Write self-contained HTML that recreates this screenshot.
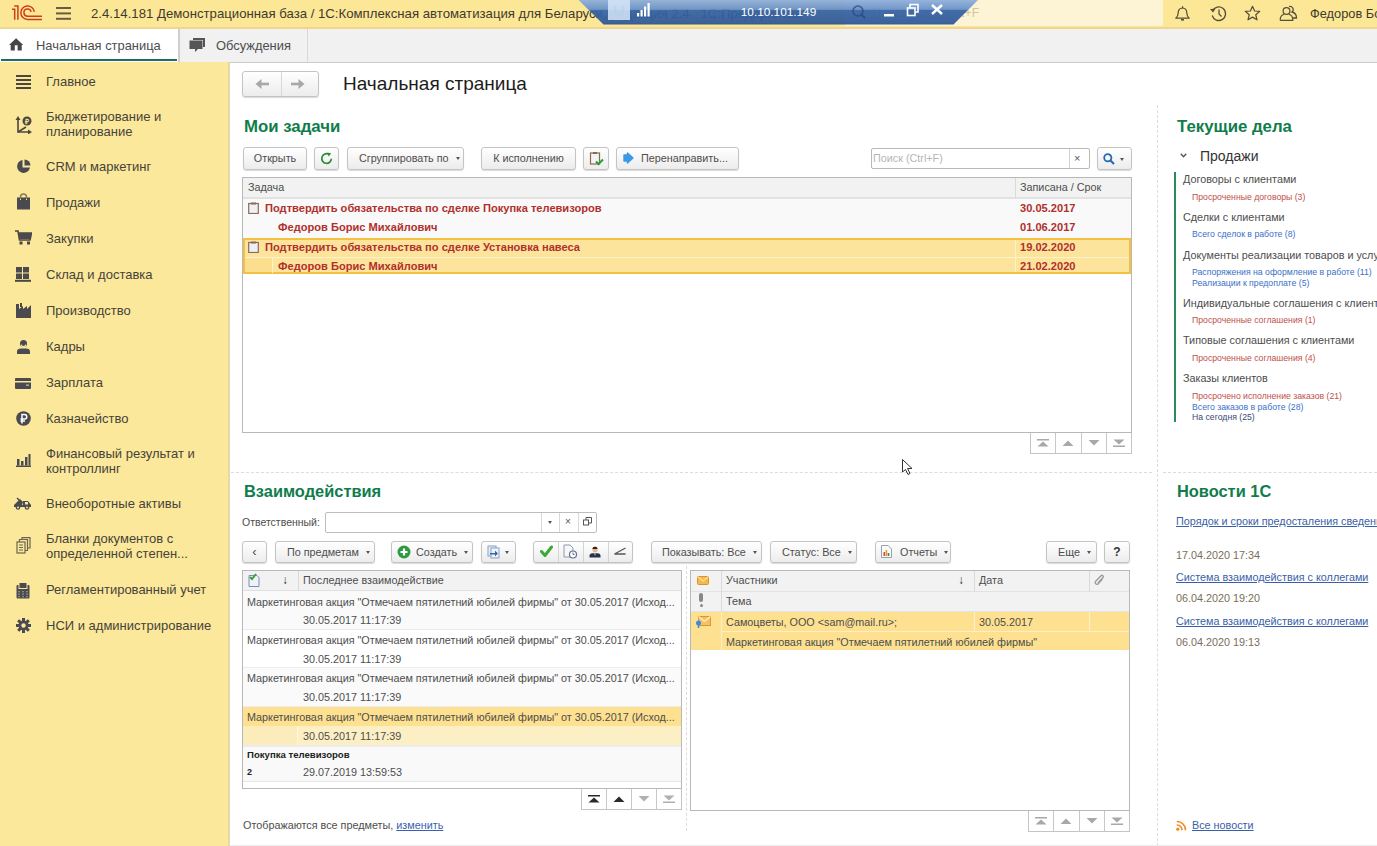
<!DOCTYPE html>
<html><head><meta charset="utf-8">
<style>
*{margin:0;padding:0;box-sizing:border-box}
html,body{width:1377px;height:846px;overflow:hidden;background:#fff;font-family:"Liberation Sans",sans-serif;color:#4d4d4d}
.a{position:absolute;white-space:nowrap}
#title{position:absolute;left:0;top:0;width:1377px;height:29px;background:#fce796}
#tabs{position:absolute;left:0;top:29px;width:1377px;height:34px;background:#f1f1f1;border-bottom:1px solid #cbcbcb}
#side{position:absolute;left:0;top:62px;width:230px;height:784px;background:#fbe89b;border-right:2px solid #e2d9ae}
.si{position:absolute;left:46px;font-size:13px;line-height:15px;color:#46433a}
.ic{position:absolute}
.btn{position:absolute;height:23px;border:1px solid #c4c4c4;border-radius:3px;background:linear-gradient(#fff,#ececec);box-shadow:0 1px 1px rgba(0,0,0,.15);font-size:12px;line-height:21px;color:#4d4d4d;text-align:center;white-space:nowrap}
.h2{position:absolute;font-size:16.8px;font-weight:bold;color:#0f7d4b;white-space:nowrap}
.t12{font-size:12px}
.t11{font-size:10.8px}
.tb{font-size:11.1px;font-weight:bold;color:#b0302c;line-height:19px}
.dd{display:inline-block;width:0;height:0;border-left:2.5px solid transparent;border-right:2.5px solid transparent;border-top:3px solid #555;vertical-align:middle;margin-left:4px;margin-top:-2px}
.btn{font-size:10.8px}
.nav{position:absolute;border:1px solid #c4c4c4;border-top:none;background:#fff;display:flex}
.nav i{flex:1;border-left:1px solid #c8c8c8;display:flex;align-items:center;justify-content:center}
.nav svg{display:block}
.nav i:first-child{border-left:none}
.rowt{line-height:19px;color:#4d4d4d}
.cd{left:1183px;font-size:10.8px;line-height:17px;color:#4d4d4d}
.cl{left:1192px;font-size:8.7px;line-height:12px}
.red{color:#c0504a}.blue{color:#3a6fc8}.navy{color:#3a4a70}
.nl{left:1176px;font-size:10.8px;line-height:17px;color:#3a5fa8;text-decoration:underline}
.nd{left:1176px;font-size:10.8px;line-height:17px;color:#7a6e5a}
</style></head><body>

<div id="title">
  <svg class="ic" style="left:8px;top:2px" width="40" height="22" viewBox="0 0 40 22"><g stroke="#cc3e1c" stroke-width="1.5" fill="none"><path d="M4 7.3 H6.7 V17.8"/><path d="M6.2 3.9 H9.9 V17.8"/><path d="M26.3 9.9 A6.75 6.75 0 1 0 19.6 17.4 H34"/><path d="M23.1 9.9 A3.6 3.6 0 1 0 19.9 14.2 H34"/></g></svg>
  <div class="ic" style="left:56px;top:7px;width:15px;height:1.6px;background:#6a5c44;box-shadow:0 5.4px 0 #6a5c44,0 10.8px 0 #6a5c44"></div>
  <div class="a" style="left:91px;top:5px;font-size:13.2px;line-height:17px;color:#3f3a2e">2.4.14.181 Демонстрационная база / 1С:Комплексная автоматизация для Беларуси, редакция 2.4 &nbsp; 1С:Предприятие</div>
  <div class="a" style="left:845px;top:0;width:318px;height:26px;background:#fdf4d6"></div>
  <svg class="ic" style="left:852px;top:6px" width="14" height="14" viewBox="0 0 14 14"><circle cx="5.5" cy="5.5" r="4.5" stroke="#b8a880" stroke-width="1.4" fill="none"/><path d="M9 9 L13 13" stroke="#b8a880" stroke-width="1.6"/></svg>
  <div class="a" style="left:872px;top:5px;font-size:12.3px;line-height:17px;color:#d4c49c">Поиск (Ctrl+Shift+F</div>
  <svg class="ic" style="left:1174px;top:5px" width="17" height="17" viewBox="0 0 17 17"><path d="M1.8 13.2 Q4 11.5 4.2 8 Q4.2 3.2 8.5 3 Q12.8 3.2 12.8 8 Q13 11.5 15.2 13.2Z" stroke="#564e3e" stroke-width="1.25" fill="none" stroke-linejoin="round"/><path d="M7 14.8 H10" stroke="#564e3e" stroke-width="1.6"/><rect x="8" y="1.2" width="1.2" height="1.8" fill="#564e3e"/></svg>
  <svg class="ic" style="left:1209px;top:5px" width="18" height="17" viewBox="0 0 18 17"><path d="M3.5 6 A6.8 6.8 0 1 1 3.2 10.5" stroke="#564e3e" stroke-width="1.3" fill="none"/><path d="M1 4 L4 7.5 L6.5 3.8Z" fill="#564e3e"/><path d="M10 4.5 V9 L12.5 11.5" stroke="#564e3e" stroke-width="1.3" fill="none"/></svg>
  <svg class="ic" style="left:1244px;top:5px" width="17" height="17" viewBox="0 0 17 17"><path d="M8.5 1.3 L10.6 6 L15.7 6.4 L11.8 9.8 L13 14.8 L8.5 12.1 L4 14.8 L5.2 9.8 L1.3 6.4 L6.4 6Z" stroke="#564e3e" stroke-width="1.25" fill="none" stroke-linejoin="round"/></svg>
  <svg class="ic" style="left:1279px;top:5px" width="19" height="17" viewBox="0 0 19 17"><path d="M10 1.5 A3.2 3.2 0 0 1 13 7 Q17.5 8 17.5 13 H14" stroke="#564e3e" stroke-width="1.3" fill="none"/><circle cx="7.5" cy="6" r="3.4" stroke="#564e3e" stroke-width="1.25" fill="none"/><path d="M1.2 15.3 Q1.2 10 5 9.5 M10 9.5 Q13.8 10 13.8 15.3 H1.2" stroke="#564e3e" stroke-width="1.25" fill="none"/></svg>
  <div class="a" style="left:1310px;top:5px;font-size:12.8px;line-height:17px;color:#3f3a2e">Федоров Борис Михайлович</div>
  <div class="a" style="left:0;top:27px;width:1377px;height:2px;background:#efd590"></div>
</div>
<!-- RDP bar -->
<svg class="ic" style="left:578px;top:0;z-index:5" width="401" height="25" viewBox="0 0 401 25">
  <defs>
    <linearGradient id="rg" x1="0" y1="0" x2="0" y2="1">
      <stop offset="0" stop-color="#8eaedb"/>
      <stop offset="0.38" stop-color="#6690c8"/>
      <stop offset="0.42" stop-color="#3563a6"/>
      <stop offset="0.92" stop-color="#2d5899"/>
      <stop offset="1" stop-color="#24508f"/>
    </linearGradient>
  </defs>
  <path d="M0.5 0 H400 L375.5 24.6 H25.5Z" fill="url(#rg)" opacity="0.93"/>
  <rect x="30" y="0" width="22" height="20" fill="#d6e6f8" opacity="0.85"/>
  <path d="M37 6 V15 H45 M37 12 H45 M45 6 V15" stroke="#b8d0ec" stroke-width="1.2" fill="none"/>
  <g fill="#fff"><rect x="59" y="13" width="2.2" height="3.5"/><rect x="62.5" y="10" width="2.2" height="6.5"/><rect x="66" y="6.5" width="2.2" height="10"/><rect x="69.5" y="3" width="2.2" height="13.5"/></g>
  <text x="200.5" y="15.5" font-family="Liberation Sans" font-size="11.8" fill="#fff" text-anchor="middle">10.10.101.149</text>
  <circle cx="280" cy="11" r="5" stroke="#2a4c86" stroke-width="1.6" fill="none" opacity="0.8"/><path d="M283.5 14.5 L287 18" stroke="#2a4c86" stroke-width="2" opacity="0.8"/>
  <rect x="306" y="14" width="10" height="2.5" fill="#fff"/>
  <rect x="329.5" y="8" width="7.5" height="7.5" fill="none" stroke="#fff" stroke-width="1.6"/>
  <path d="M332 8 V4.5 H340 V12 H337" stroke="#fff" stroke-width="1.6" fill="none"/>
  <path d="M354 5 L364 14 M364 5 L354 14" stroke="#fff" stroke-width="2.4"/>
</svg>

<div id="tabs">
  <div class="a" style="left:0;top:0;width:180px;height:33px;background:#fff;border-right:2px solid #cfcfcf"></div>
  <div class="a" style="left:1px;top:30px;width:176px;height:2px;background:#1d6e5c"></div>
  <div class="a" style="left:307px;top:0;width:1px;height:33px;background:#d8d8d8"></div>
  <svg class="ic" style="left:9px;top:9px" width="15" height="13" viewBox="0 0 15 13"><path d="M7.1 0.3 L0 6.9 H1.7 V12.5 H5.8 V7.2 H8.6 V12.5 H12.7 V6.9 H14.2Z" fill="#464646"/></svg>
  <div class="a" style="left:36px;top:8px;font-size:12.9px;line-height:17px;color:#4d4d4d">Начальная страница</div>
  <svg class="ic" style="left:189px;top:8px" width="17" height="16" viewBox="0 0 17 16"><path d="M4 1 H16 V10 H14 V3 H4Z" fill="#555"/><path d="M0.5 3.5 H13.5 V12 H9 L6 15 V12 H0.5Z" fill="#555"/></svg>
  <div class="a" style="left:216px;top:8px;font-size:12.9px;line-height:17px;color:#4d4d4d">Обсуждения</div>
</div>

<div id="side">
  <svg class="ic" style="left:16px;top:12px" width="15" height="15" viewBox="0 0 15 15"><g fill="#4a4740"><rect x="0" y="1" width="15" height="2"/><rect x="0" y="5" width="15" height="2"/><rect x="0" y="9" width="15" height="2"/><rect x="0" y="13" width="15" height="2"/></g></svg>
  <div class="si" style="top:12px">Главное</div>

  <svg class="ic" style="left:15px;top:53px" width="17" height="19" viewBox="0 0 17 19"><g stroke="#4a4740" stroke-width="1.6" fill="none"><path d="M3 3 V17 H14"/><path d="M3 17 L11 12"/></g><g fill="#4a4740"><path d="M0.5 5 L3 1 L5.5 5Z"/><path d="M13 14.5 L17 17 L13 19.5Z"/><circle cx="12" cy="6" r="4.5"/></g><text x="12" y="8.5" font-size="7" font-weight="bold" fill="#fbe89a" text-anchor="middle" font-family="Liberation Sans">₽</text></svg>
  <div class="si" style="top:47px">Бюджетирование и<br>планирование</div>

  <svg class="ic" style="left:16px;top:97px" width="15" height="15" viewBox="0 0 15 15"><path d="M6.5 1 A6.5 6.5 0 1 0 14 8.5 H6.5Z" fill="#4a4a50"/><path d="M8.5 0.5 V6.5 H14.5 A6 6 0 0 0 8.5 0.5Z" fill="#4a4a50"/></svg>
  <div class="si" style="top:97px">CRM и маркетинг</div>

  <svg class="ic" style="left:17px;top:131px" width="13" height="17" viewBox="0 0 13 17"><path d="M3.5 6 V4 A3 3 0 0 1 9.5 4 V6" stroke="#8a7a50" stroke-width="1.5" fill="none"/><path d="M0 4.5 H3 V7 H4 V4.5 H9 V7 H10 V4.5 H13 V16.5 H0Z" fill="#4a4a50"/></svg>
  <div class="si" style="top:133px">Продажи</div>

  <svg class="ic" style="left:15px;top:168px" width="17" height="15" viewBox="0 0 17 15"><path d="M0 1 H3 L4.5 10 H15 L16.5 3 H3.5" stroke="#4a4740" stroke-width="1.6" fill="none"/><path d="M3.5 3 H16.5 L15 9 H4.5Z" fill="#4a4a50"/><rect x="4.5" y="11.5" width="3" height="3" fill="#4a4740"/><rect x="12" y="11.5" width="3" height="3" fill="#4a4740"/></svg>
  <div class="si" style="top:169px">Закупки</div>

  <svg class="ic" style="left:15px;top:205px" width="16" height="15" viewBox="0 0 16 15"><g fill="#4a4a50"><rect x="1" y="0" width="6" height="5.5"/><rect x="8" y="0" width="6" height="5.5"/><rect x="1" y="6.5" width="6" height="5.5"/><rect x="8" y="6.5" width="6" height="5.5"/><rect x="0" y="12.8" width="16" height="2" fill="#4a4740"/></g></svg>
  <div class="si" style="top:205px">Склад и доставка</div>

  <svg class="ic" style="left:16px;top:240px" width="15" height="16" viewBox="0 0 15 16"><path d="M0 2 H3 V7 L7 4 V7 L11 4 V7 L15 3 V16 H0Z" fill="#4a4a50"/><rect x="4" y="1" width="2" height="4" fill="#4a4a50"/></svg>
  <div class="si" style="top:241px">Производство</div>

  <svg class="ic" style="left:16px;top:277px" width="15" height="15" viewBox="0 0 15 15"><circle cx="7.5" cy="4.5" r="3.5" fill="#4a4a50"/><path d="M5 5 Q7.5 9 10 5 V7 Q7.5 10 5 7Z" fill="#f5e2b0"/><path d="M1 15 V12.5 Q1 9.5 5 9.5 H10 Q14 9.5 14 12.5 V15Z" fill="#4a4a50"/></svg>
  <div class="si" style="top:277px">Кадры</div>

  <svg class="ic" style="left:15px;top:316px" width="16" height="11" viewBox="0 0 16 11"><rect x="0" y="0" width="16" height="11" rx="1" fill="#4a4a50"/><rect x="0" y="3" width="16" height="1.5" fill="#fbe89a"/><rect x="11" y="6.5" width="3" height="1.3" fill="#bbb"/></svg>
  <div class="si" style="top:313px">Зарплата</div>

  <svg class="ic" style="left:16px;top:349px" width="15" height="15" viewBox="0 0 15 15"><circle cx="7.5" cy="7.5" r="7.3" fill="#4a4a50"/><path d="M6 12.5 V3.5 H8.5 A2.2 2.2 0 0 1 8.5 8 H4.5 M4.5 10 H9" stroke="#fff" stroke-width="1.5" fill="none"/></svg>
  <div class="si" style="top:349px">Казначейство</div>

  <svg class="ic" style="left:16px;top:392px" width="15" height="13" viewBox="0 0 15 13"><g fill="#4a4a50"><rect x="1" y="5" width="2.5" height="6.5"/><rect x="5" y="7" width="2.5" height="4.5"/><rect x="9" y="3" width="2.5" height="8.5"/><rect x="12.5" y="0" width="2" height="11.5"/><rect x="0" y="11.5" width="15" height="1.5"/></g></svg>
  <div class="si" style="top:384px">Финансовый результат и<br>контроллинг</div>

  <svg class="ic" style="left:14px;top:434px" width="18" height="14" viewBox="0 0 18 14"><g fill="#4a4a50"><path d="M0 9 L6 3 L9 6 L8 9Z"/><path d="M9 5 H14 L17 9 V11 H9Z"/><rect x="0" y="9" width="17" height="2"/><circle cx="4" cy="11.5" r="2.3"/><circle cx="13" cy="11.5" r="2.3"/></g><path d="M3 2 L8 7" stroke="#4a4a50" stroke-width="1.4"/><rect x="11" y="6" width="3" height="2.5" fill="#fbe89a"/><circle cx="4" cy="11.5" r="1" fill="#fbe89a"/><circle cx="13" cy="11.5" r="1" fill="#fbe89a"/></svg>
  <div class="si" style="top:434px">Внеоборотные активы</div>

  <svg class="ic" style="left:16px;top:475px" width="15" height="17" viewBox="0 0 15 17"><g stroke="#6a6450" stroke-width="1.2" fill="none"><rect x="1" y="5" width="8" height="11"/><path d="M3.5 5 V2.5 H11.5 V13.5 H9"/><path d="M6 2.5 V0.6 H14 V11 H11.5"/><path d="M3 8 H7 M3 10.5 H7 M3 13 H7"/></g></svg>
  <div class="si" style="top:469px">Бланки документов с<br>определенной степен...</div>

  <svg class="ic" style="left:16px;top:520px" width="14" height="17" viewBox="0 0 14 17"><rect x="0.5" y="3" width="13" height="13.5" rx="1" fill="#4a4a50"/><rect x="3" y="0.5" width="8" height="6" fill="#4a4a50" stroke="#fbe89a" stroke-width="1"/><g fill="#8a8a80"><rect x="2" y="9" width="2" height="1.3"/><rect x="6" y="9" width="2" height="1.3"/><rect x="10" y="9" width="2" height="1.3"/><rect x="2" y="11.5" width="2" height="1.3"/><rect x="6" y="11.5" width="2" height="1.3"/><rect x="10" y="11.5" width="2" height="1.3"/><rect x="2" y="14" width="2" height="1.3"/><rect x="6" y="14" width="2" height="1.3"/><rect x="10" y="14" width="2" height="1.3"/></g></svg>
  <div class="si" style="top:520px">Регламентированный учет</div>

  <svg class="ic" style="left:16px;top:556px" width="15" height="15" viewBox="0 0 15 15"><g fill="#4a4a50"><circle cx="7.5" cy="7.5" r="5"/><g id="tooth"><rect x="6" y="0" width="3" height="15"/></g><rect x="6" y="0" width="3" height="15" transform="rotate(45 7.5 7.5)"/><rect x="6" y="0" width="3" height="15" transform="rotate(90 7.5 7.5)"/><rect x="6" y="0" width="3" height="15" transform="rotate(135 7.5 7.5)"/></g><circle cx="7.5" cy="7.5" r="2.2" fill="#fbe89a"/></svg>
  <div class="si" style="top:556px">НСИ и администрирование</div>
</div>


<!-- MAIN -->
<div class="btn" style="left:242px;top:71px;width:77px;height:26px"></div>
<div class="a" style="left:281px;top:72px;width:1px;height:24px;background:#d8d8d8"></div>
<svg class="ic" style="left:254px;top:78px" width="16" height="12" viewBox="0 0 16 12"><path d="M15 6 H4" stroke="#a8a8a8" stroke-width="2.6"/><path d="M7.5 1 L1.5 6 L7.5 11Z" fill="#a8a8a8"/></svg>
<svg class="ic" style="left:290px;top:78px" width="16" height="12" viewBox="0 0 16 12"><path d="M1 6 H12" stroke="#a8a8a8" stroke-width="2.6"/><path d="M8.5 1 L14.5 6 L8.5 11Z" fill="#a8a8a8"/></svg>
<div class="a" style="left:343px;top:72px;font-size:19px;line-height:24px;color:#1c1c1c">Начальная страница</div>

<div class="h2" style="left:244px;top:117px;line-height:20px">Мои задачи</div>

<div class="btn" style="left:243px;top:147px;width:64px">Открыть</div>
<div class="btn" style="left:314px;top:147px;width:25px"></div>
<svg class="ic" style="left:320px;top:152px" width="13" height="13" viewBox="0 0 13 13"><path d="M11.4 6.8 A4.8 4.8 0 1 1 8.2 2.0" stroke="#2b8c3a" stroke-width="1.7" fill="none"/><path d="M7.3 0.6 L11.2 1.6 L8.6 4.6Z" fill="#1f8a30"/></svg>
<div class="btn" style="left:347px;top:147px;width:117px;text-align:left;padding-left:11px">Сгруппировать по <span class="dd"></span></div>
<div class="btn" style="left:481px;top:147px;width:95px">К исполнению</div>
<div class="btn" style="left:583px;top:147px;width:26px"></div>
<svg class="ic" style="left:589px;top:151px" width="15" height="15" viewBox="0 0 15 15"><rect x="1.5" y="2" width="9" height="11" fill="#f4f4f4" stroke="#8a6a50" stroke-width="1.2"/><rect x="4" y="1" width="4" height="2" fill="#8a6a50"/><path d="M7 10.5 L9.5 13 L14 8.5" stroke="#2a9a3a" stroke-width="2" fill="none"/></svg>
<div class="btn" style="left:616px;top:147px;width:123px;text-align:left;padding-left:24px">Перенаправить...</div>
<svg class="ic" style="left:623px;top:152px" width="12" height="12" viewBox="0 0 12 12"><path d="M1 3 H4.5 V1 L10 6 L4.5 11 V9 H1Z" fill="#3a9ae8" stroke="#3a9ae8" stroke-width="1.4" stroke-linejoin="round"/></svg>

<div class="a" style="left:871px;top:148px;width:219px;height:21px;border:1px solid #b9b9b9;border-radius:2px;background:#fff"></div>
<div class="a" style="left:1069px;top:149px;width:1px;height:19px;background:#d0d0d0"></div>
<div class="a" style="left:873px;top:149px;font-size:10.8px;line-height:19px;color:#b5b5b5">Поиск (Ctrl+F)</div>
<div class="a" style="left:1074px;top:149px;font-size:11px;line-height:19px;color:#555">×</div>
<div class="btn" style="left:1097px;top:147px;width:35px"></div>
<svg class="ic" style="left:1103px;top:153px" width="12" height="12" viewBox="0 0 12 12"><circle cx="4.8" cy="4.8" r="3.6" stroke="#2b6cb0" stroke-width="1.8" fill="none"/><path d="M7.5 7.5 L11 11" stroke="#2b6cb0" stroke-width="2.2"/></svg>
<div class="a" style="left:1120px;top:158px;border-left:2.5px solid transparent;border-right:2.5px solid transparent;border-top:3px solid #555"></div>

<!-- tasks table -->
<div class="a" style="left:242px;top:177px;width:890px;height:256px;border:1px solid #b8b8b8;background:#fff"></div>
<div class="a" style="left:243px;top:178px;width:888px;height:21px;background:#f2f2f2;border-bottom:2px solid #e2e2e2"></div>
<div class="a" style="left:1015px;top:178px;width:1px;height:20px;background:#dadada"></div>
<div class="a t11" style="left:248px;top:178px;line-height:19px;color:#4d4d4d">Задача</div>
<div class="a t11" style="left:1020px;top:178px;line-height:19px;color:#4d4d4d">Записана / Срок</div>
<div class="a" style="left:243px;top:199px;width:888px;height:39px;background:#f9f9f9"></div>
<div class="a" style="left:243px;top:238px;width:888px;height:36px;background:#fde49c;border:2px solid #f3c03f"></div>
<div class="a" style="left:245px;top:257px;width:884px;height:1px;background:#fff1c8"></div>
<div class="a" style="left:272px;top:258px;width:1px;height:15px;background:#fff1c8"></div>
<div class="a" style="left:245px;top:258px;width:27px;height:14px;background:#fbdf8e"></div>
<div class="a" style="left:1015px;top:240px;width:1px;height:32px;background:#fff1c8"></div>
<svg class="ic" style="left:248px;top:202px" width="11" height="12" viewBox="0 0 11 12"><rect x="0.7" y="1.5" width="9.6" height="10" fill="#eef0f5" stroke="#8a6a58" stroke-width="1.2"/><rect x="3" y="0.5" width="5" height="2" fill="#8a6a58"/></svg>
<svg class="ic" style="left:248px;top:241px" width="11" height="12" viewBox="0 0 11 12"><rect x="0.7" y="1.5" width="9.6" height="10" fill="#eef0f5" stroke="#8a6a58" stroke-width="1.2"/><rect x="3" y="0.5" width="5" height="2" fill="#8a6a58"/></svg>
<div class="a tb" style="left:265px;top:199px">Подтвердить обязательства по сделке Покупка телевизоров</div>
<div class="a tb" style="left:278px;top:218px">Федоров Борис Михайлович</div>
<div class="a tb" style="left:265px;top:238px">Подтвердить обязательства по сделке Установка навеса</div>
<div class="a tb" style="left:278px;top:257px">Федоров Борис Михайлович</div>
<div class="a tb" style="left:1020px;top:199px">30.05.2017</div>
<div class="a tb" style="left:1020px;top:218px">01.06.2017</div>
<div class="a tb" style="left:1020px;top:238px">19.02.2020</div>
<div class="a tb" style="left:1020px;top:257px">21.02.2020</div>

<div class="nav" style="left:1030px;top:433px;width:102px;height:21px"><i><svg width="12" height="8" viewBox="0 0 12 8"><rect x="0" y="0" width="12" height="1.5" fill="#a8a8a8"/><path d="M0.5 7.5 L6 2.5 L11.5 7.5Z" fill="#a8a8a8"/></svg></i><i><svg width="12" height="6" viewBox="0 0 12 6"><path d="M0.5 6 L6 0.5 L11.5 6Z" fill="#a8a8a8"/></svg></i><i><svg width="12" height="6" viewBox="0 0 12 6"><path d="M0.5 0 L6 5.5 L11.5 0Z" fill="#a8a8a8"/></svg></i><i><svg width="12" height="8" viewBox="0 0 12 8"><path d="M0.5 0.5 L6 5.5 L11.5 0.5Z" fill="#a8a8a8"/><rect x="0" y="6.5" width="12" height="1.5" fill="#a8a8a8"/></svg></i></div>


<!-- separators -->
<div class="a" style="left:231px;top:472px;width:921px;height:1px;border-top:1px dashed #dcdcdc"></div>
<div class="a" style="left:1163px;top:472px;width:214px;height:1px;border-top:1px dashed #dcdcdc"></div>
<div class="a" style="left:1157px;top:105px;width:1px;height:741px;border-left:1px dashed #dcdcdc"></div>
<div class="a" style="left:686px;top:566px;width:1px;height:265px;border-left:1px dashed #dcdcdc"></div>
<div class="a" style="left:230px;top:845px;width:1147px;height:1px;background:#ececec"></div>

<!-- cursor -->
<svg class="ic" style="left:902px;top:459px" width="11" height="16" viewBox="0 0 11 16"><path d="M0.5 0.5 V13 L3.5 10.5 L6 15.5 L8 14.5 L5.5 9.5 H10Z" fill="#fff" stroke="#333" stroke-width="1"/></svg>

<!-- Interactions -->
<div class="h2" style="left:244px;top:481px;line-height:20px;font-size:16.4px">Взаимодействия</div>
<div class="a" style="left:242px;top:514px;font-size:10.5px;line-height:17px;color:#4d4d4d">Ответственный:</div>
<div class="a" style="left:325px;top:512px;width:272px;height:21px;border:1px solid #bdbdbd;border-radius:2px;background:#fff"></div>
<div class="a" style="left:541px;top:513px;width:1px;height:19px;background:#d8d8d8"></div>
<div class="a" style="left:559px;top:513px;width:1px;height:19px;background:#d8d8d8"></div>
<div class="a" style="left:578px;top:513px;width:1px;height:19px;background:#d8d8d8"></div>
<div class="a" style="left:548px;top:521px;border-left:2.5px solid transparent;border-right:2.5px solid transparent;border-top:3px solid #555"></div>
<div class="a" style="left:565px;top:513px;font-size:10px;line-height:18px;color:#555">×</div>
<svg class="ic" style="left:583px;top:517px" width="9" height="9" viewBox="0 0 9 9"><rect x="0.5" y="3" width="5" height="5" fill="#fff" stroke="#555" stroke-width="1"/><path d="M3 3 V0.5 H8.5 V6 H5.5" stroke="#555" stroke-width="1" fill="none"/></svg>

<div class="btn" style="left:242px;top:541px;width:25px;height:22px;line-height:20px;font-size:13px">‹</div>
<div class="btn" style="left:275px;top:541px;width:100px;height:22px;line-height:20px;text-align:left;padding-left:11px">По предметам <span class="dd"></span></div>
<div class="btn" style="left:391px;top:541px;width:82px;height:22px;line-height:20px;text-align:left;padding-left:24px">Создать <span class="dd"></span></div>
<svg class="ic" style="left:397px;top:545px" width="14" height="14" viewBox="0 0 14 14"><circle cx="7" cy="7" r="6.5" fill="#2e9a44"/><path d="M7 3.5 V10.5 M3.5 7 H10.5" stroke="#fff" stroke-width="2.2"/></svg>
<div class="btn" style="left:481px;top:541px;width:35px;height:22px"></div>
<svg class="ic" style="left:487px;top:545px" width="14" height="14" viewBox="0 0 14 14"><rect x="1" y="1" width="8" height="10" fill="#e8eef8" stroke="#8aa0c0" stroke-width="1"/><rect x="4" y="3" width="8" height="10" fill="#f0f4fa" stroke="#8aa0c0" stroke-width="1"/><path d="M3 8 H8 V5.5 L11 8.5 L8 11.5 V9.5 H3Z" fill="#2b6cb0"/></svg>
<div class="a" style="left:505px;top:551px;border-left:2.5px solid transparent;border-right:2.5px solid transparent;border-top:3px solid #555"></div>

<div class="btn" style="left:533px;top:541px;width:100px;height:22px"></div>
<div class="a" style="left:558px;top:542px;width:1px;height:20px;background:#d4d4d4"></div>
<div class="a" style="left:583px;top:542px;width:1px;height:20px;background:#d4d4d4"></div>
<div class="a" style="left:608px;top:542px;width:1px;height:20px;background:#d4d4d4"></div>
<svg class="ic" style="left:540px;top:545px" width="13" height="13" viewBox="0 0 13 13"><path d="M1.5 6.5 L5 10.5 L11.5 2" stroke="#3aa83a" stroke-width="3" fill="none" stroke-linejoin="round" stroke-linecap="round"/></svg>
<svg class="ic" style="left:563px;top:544px" width="15" height="15" viewBox="0 0 15 15"><path d="M1 1 H7 L10 4 V13 H1Z" fill="#f7f7f7" stroke="#8a9ab0" stroke-width="1"/><circle cx="10" cy="10.5" r="3.5" fill="#fff" stroke="#607090" stroke-width="1.2"/><path d="M10 8.5 V10.5 H11.5" stroke="#607090" stroke-width="1" fill="none"/></svg>
<svg class="ic" style="left:589px;top:545px" width="12" height="13" viewBox="0 0 12 13"><ellipse cx="6" cy="4.6" rx="2.6" ry="3" fill="#e8b890"/><path d="M3.3 4 A2.8 3 0 0 1 8.7 4 Z" fill="#2a2020"/><path d="M0.5 12.5 V11 Q0.5 8.3 3.5 8.3 H8.5 Q11.5 8.3 11.5 11 V12.5Z" fill="#253350"/><path d="M5 8.3 L6 11 L7 8.3" fill="#d8a0a0"/></svg>
<svg class="ic" style="left:613px;top:546px" width="14" height="11" viewBox="0 0 14 11"><path d="M12.5 2 L1.5 8 H12.5" stroke="#555" stroke-width="1.3" fill="none"/></svg>

<div class="btn" style="left:651px;top:541px;width:111px;height:22px;line-height:20px;text-align:left;padding-left:10px">Показывать: Все <span class="dd"></span></div>
<div class="btn" style="left:770px;top:541px;width:87px;height:22px;line-height:20px;text-align:left;padding-left:11px">Статус: Все <span class="dd"></span></div>
<div class="btn" style="left:875px;top:541px;width:76px;height:22px;line-height:20px;text-align:left;padding-left:24px">Отчеты <span class="dd"></span></div>
<svg class="ic" style="left:881px;top:545px" width="11" height="13" viewBox="0 0 11 13"><path d="M0.5 0.5 H7 L10.5 4 V12.5 H0.5Z" fill="#fafafa" stroke="#9aa0b0" stroke-width="1"/><rect x="2.5" y="7" width="1.6" height="4" fill="#d04a3a"/><rect x="4.6" y="5" width="1.6" height="6" fill="#e0a020"/><rect x="6.7" y="8" width="1.6" height="3" fill="#3a8a3a"/></svg>
<div class="btn" style="left:1046px;top:541px;width:51px;height:22px;line-height:20px;text-align:left;padding-left:11px">Еще <span class="dd"></span></div>
<div class="btn" style="left:1104px;top:541px;width:26px;height:22px;line-height:20px;font-weight:bold;font-size:12px;color:#333">?</div>

<!-- left interactions table -->
<div class="a" style="left:242px;top:570px;width:440px;height:219px;border:1px solid #b8b8b8;background:#fff"></div>
<div class="a" style="left:243px;top:571px;width:438px;height:20px;background:#f2f2f2;border-bottom:1px solid #e0e0e0"></div>
<div class="a" style="left:298px;top:571px;width:1px;height:20px;background:#dadada"></div>
<svg class="ic" style="left:248px;top:573px" width="12" height="14" viewBox="0 0 12 14"><path d="M1 2.5 H9 L11 4.5 V13.5 H1Z" fill="#eef2fa" stroke="#7a90b8" stroke-width="1"/><path d="M2 4 L4 6 L8 1" stroke="#3aa03a" stroke-width="2" fill="none"/></svg>
<div class="a" style="left:282px;top:571px;font-size:12px;line-height:19px;color:#333">↓</div>
<div class="a t11" style="left:303px;top:571px;line-height:19px;color:#4d4d4d">Последнее взаимодействие</div>

<div class="a" style="left:243px;top:591px;width:438px;height:39px;background:#fafafa;border-bottom:1px solid #ececec"></div>
<div class="a" style="left:243px;top:630px;width:438px;height:38px;background:#fff;border-bottom:1px solid #ececec"></div>
<div class="a" style="left:243px;top:668px;width:438px;height:39px;background:#fafafa;border-bottom:1px solid #ececec"></div>
<div class="a" style="left:243px;top:707px;width:438px;height:19px;background:#fde190"></div>
<div class="a" style="left:243px;top:726px;width:438px;height:19px;background:#fdefc4"></div>
<div class="a" style="left:243px;top:726px;width:55px;height:19px;background:#fcebbb;border-right:1px solid #fff6dc"></div>
<div class="a" style="left:243px;top:745px;width:438px;height:37px;background:#f9f9f9;border-top:2px solid #ececec;border-bottom:1px solid #e6e6e6"></div>

<div class="a t11 rowt" style="left:247px;top:593px">Маркетинговая акция "Отмечаем пятилетний юбилей фирмы" от 30.05.2017 (Исход...</div>
<div class="a t11 rowt" style="left:303px;top:611px">30.05.2017 11:17:39</div>
<div class="a t11 rowt" style="left:247px;top:631px">Маркетинговая акция "Отмечаем пятилетний юбилей фирмы" от 30.05.2017 (Исход...</div>
<div class="a t11 rowt" style="left:303px;top:650px">30.05.2017 11:17:39</div>
<div class="a t11 rowt" style="left:247px;top:669px">Маркетинговая акция "Отмечаем пятилетний юбилей фирмы" от 30.05.2017 (Исход...</div>
<div class="a t11 rowt" style="left:303px;top:688px">30.05.2017 11:17:39</div>
<div class="a t11 rowt" style="left:247px;top:708px">Маркетинговая акция "Отмечаем пятилетний юбилей фирмы" от 30.05.2017 (Исход...</div>
<div class="a t11 rowt" style="left:303px;top:727px">30.05.2017 11:17:39</div>
<div class="a" style="left:247px;top:746px;font-size:9.6px;font-weight:bold;line-height:18px;color:#222">Покупка телевизоров</div>
<div class="a" style="left:247px;top:763px;font-size:9px;font-weight:bold;line-height:18px;color:#222">2</div>
<div class="a t11 rowt" style="left:303px;top:763px">29.07.2019 13:59:53</div>

<div class="nav" style="left:581px;top:789px;width:101px;height:21px"><i><svg width="12" height="8" viewBox="0 0 12 8"><rect x="0" y="0" width="12" height="1.5" fill="#2a2a2a"/><path d="M0.5 7.5 L6 2.5 L11.5 7.5Z" fill="#2a2a2a"/></svg></i><i><svg width="12" height="6" viewBox="0 0 12 6"><path d="M0.5 6 L6 0.5 L11.5 6Z" fill="#2a2a2a"/></svg></i><i><svg width="12" height="6" viewBox="0 0 12 6"><path d="M0.5 0 L6 5.5 L11.5 0Z" fill="#b0b0b0"/></svg></i><i><svg width="12" height="8" viewBox="0 0 12 8"><path d="M0.5 0.5 L6 5.5 L11.5 0.5Z" fill="#b0b0b0"/><rect x="0" y="6.5" width="12" height="1.5" fill="#b0b0b0"/></svg></i></div>
<div class="a" style="left:243px;top:817px;font-size:10.8px;line-height:17px;color:#4d4d4d">Отображаются все предметы, <span style="color:#3a5fb0;text-decoration:underline">изменить</span></div>

<!-- right interactions table -->
<div class="a" style="left:690px;top:570px;width:440px;height:241px;border:1px solid #b8b8b8;background:#fff"></div>
<div class="a" style="left:691px;top:571px;width:438px;height:41px;background:#f2f2f2"></div>
<div class="a" style="left:691px;top:591px;width:438px;height:1px;background:#e2e2e2"></div>
<div class="a" style="left:691px;top:611px;width:438px;height:1px;background:#e2e2e2"></div>
<div class="a" style="left:721px;top:571px;width:1px;height:40px;background:#dadada"></div>
<div class="a" style="left:974px;top:571px;width:1px;height:20px;background:#dadada"></div>
<div class="a" style="left:1089px;top:571px;width:1px;height:20px;background:#dadada"></div>
<svg class="ic" style="left:697px;top:576px" width="12" height="9" viewBox="0 0 12 9"><rect x="0.5" y="0.5" width="11" height="8" rx="1" fill="#f5b850" stroke="#d8962a" stroke-width="1"/><path d="M1 1 L6 5 L11 1" stroke="#fde0a0" stroke-width="1.1" fill="none"/></svg>
<div class="a t11" style="left:726px;top:571px;line-height:19px;color:#4d4d4d">Участники</div>
<div class="a" style="left:958px;top:571px;font-size:12px;line-height:19px;color:#333">↓</div>
<div class="a t11" style="left:979px;top:571px;line-height:19px;color:#4d4d4d">Дата</div>
<svg class="ic" style="left:1094px;top:574px" width="11" height="13" viewBox="0 0 11 13"><path d="M8.5 5 L4 10 A1.8 1.8 0 0 1 1.5 7.5 L7 1.8 A1.2 1.2 0 0 1 9 3.5 L4 9" stroke="#999" stroke-width="1.3" fill="none"/></svg>
<div class="a" style="left:699px;top:593px;width:4px;height:9px;background:#888;border-radius:2px"></div>
<div class="a" style="left:700px;top:604px;width:3px;height:3px;background:#888;border-radius:2px"></div>
<div class="a t11" style="left:726px;top:592px;line-height:19px;color:#4d4d4d">Тема</div>

<div class="a" style="left:691px;top:612px;width:438px;height:38px;background:#fde190"></div>
<div class="a" style="left:721px;top:631px;width:408px;height:1px;background:#fdefc4"></div>
<div class="a" style="left:974px;top:612px;width:1px;height:19px;background:#fdf0c8"></div>
<div class="a" style="left:1089px;top:612px;width:1px;height:19px;background:#fdf0c8"></div>
<div class="a" style="left:721px;top:612px;width:1px;height:38px;background:#fdefc4"></div>
<svg class="ic" style="left:695px;top:615px" width="16" height="14" viewBox="0 0 16 14"><rect x="3.5" y="1.5" width="12" height="9" fill="#f7c060" stroke="#d89a30" stroke-width="1"/><path d="M3.5 1.5 L9.5 6.5 L15.5 1.5" stroke="#fff2d0" stroke-width="1.2" fill="none"/><circle cx="3.5" cy="8" r="2.5" fill="#3a8ae0"/><rect x="2.7" y="9" width="1.6" height="4" fill="#3a8ae0"/></svg>
<div class="a t11 rowt" style="left:726px;top:613px">Самоцветы, ООО &lt;sam@mail.ru&gt;;</div>
<div class="a t11 rowt" style="left:979px;top:613px">30.05.2017</div>
<div class="a t11 rowt" style="left:726px;top:633px">Маркетинговая акция "Отмечаем пятилетний юбилей фирмы"</div>

<div class="nav" style="left:1028px;top:811px;width:102px;height:21px"><i><svg width="12" height="8" viewBox="0 0 12 8"><rect x="0" y="0" width="12" height="1.5" fill="#a8a8a8"/><path d="M0.5 7.5 L6 2.5 L11.5 7.5Z" fill="#a8a8a8"/></svg></i><i><svg width="12" height="6" viewBox="0 0 12 6"><path d="M0.5 6 L6 0.5 L11.5 6Z" fill="#a8a8a8"/></svg></i><i><svg width="12" height="6" viewBox="0 0 12 6"><path d="M0.5 0 L6 5.5 L11.5 0Z" fill="#a8a8a8"/></svg></i><i><svg width="12" height="8" viewBox="0 0 12 8"><path d="M0.5 0.5 L6 5.5 L11.5 0.5Z" fill="#a8a8a8"/><rect x="0" y="6.5" width="12" height="1.5" fill="#a8a8a8"/></svg></i></div>

<!-- right column -->
<div class="h2" style="left:1177px;top:117px;line-height:20px">Текущие дела</div>
<svg class="ic" style="left:1180px;top:153px" width="7" height="5" viewBox="0 0 7 5"><path d="M0.8 0.8 L3.5 3.8 L6.2 0.8" stroke="#555" stroke-width="1.4" fill="none"/></svg>
<div class="a" style="left:1200px;top:147px;font-size:14px;line-height:18px;color:#333">Продажи</div>
<div class="a" style="left:1174px;top:172px;width:2px;height:250px;background:#2a8a5a"></div>
<div class="a cd" style="top:171px">Договоры с клиентами</div>
<div class="a cl red" style="top:191px">Просроченные договоры (3)</div>
<div class="a cd" style="top:209px">Сделки с клиентами</div>
<div class="a cl blue" style="top:228px">Всего сделок в работе (8)</div>
<div class="a cd" style="top:247px">Документы реализации товаров и услуг</div>
<div class="a cl blue" style="top:266px">Распоряжения на оформление в работе (11)</div>
<div class="a cl blue" style="top:277px">Реализации к предоплате (5)</div>
<div class="a cd" style="top:295px">Индивидуальные соглашения с клиентами</div>
<div class="a cl red" style="top:314px">Просроченные соглашения (1)</div>
<div class="a cd" style="top:332px">Типовые соглашения с клиентами</div>
<div class="a cl red" style="top:352px">Просроченные соглашения (4)</div>
<div class="a cd" style="top:370px">Заказы клиентов</div>
<div class="a cl red" style="top:390px">Просрочено исполнение заказов (21)</div>
<div class="a cl blue" style="top:401px">Всего заказов в работе (28)</div>
<div class="a cl navy" style="top:411px">На сегодня (25)</div>

<div class="h2" style="left:1177px;top:481px;line-height:20px;font-size:16.4px">Новости 1С</div>
<div class="a nl" style="top:513px">Порядок и сроки предосталения сведений</div>
<div class="a nd" style="top:547px">17.04.2020 17:34</div>
<div class="a nl" style="top:569px">Система взаимодействия с коллегами</div>
<div class="a nd" style="top:590px">06.04.2020 19:20</div>
<div class="a nl" style="top:613px">Система взаимодействия с коллегами</div>
<div class="a nd" style="top:634px">06.04.2020 19:13</div>
<svg class="ic" style="left:1176px;top:820px" width="11" height="11" viewBox="0 0 11 11"><circle cx="1.8" cy="9.2" r="1.6" fill="#f08a20"/><path d="M0.8 5 A5 5 0 0 1 6 10.2 M0.8 1.5 A8.5 8.5 0 0 1 9.5 10.2" stroke="#f08a20" stroke-width="1.6" fill="none"/></svg>
<div class="a nl" style="left:1192px;top:817px">Все новости</div>

</body></html>
